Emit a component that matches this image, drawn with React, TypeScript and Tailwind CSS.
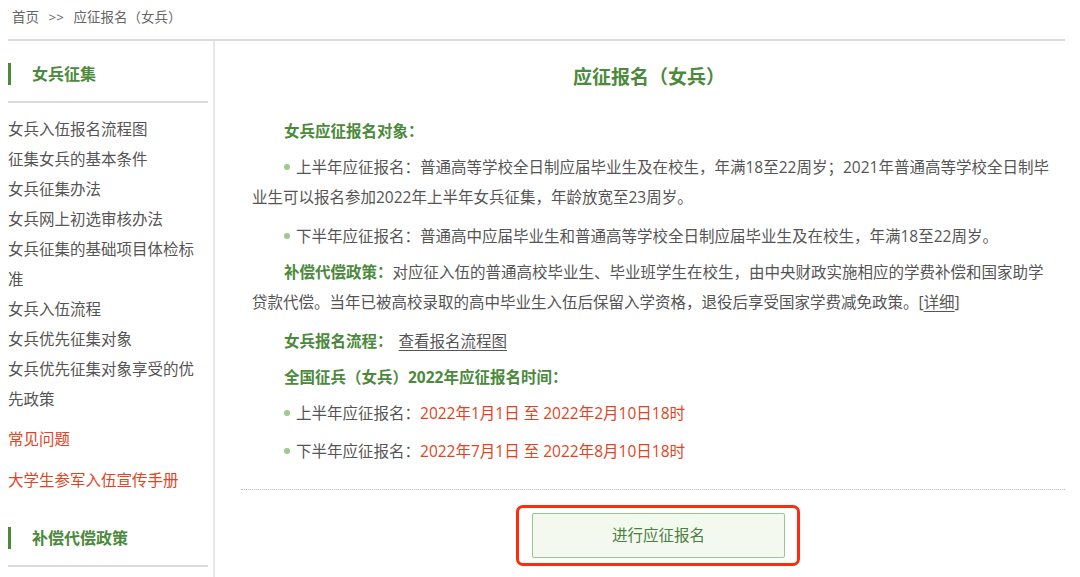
import React from "react";

const G = "text-[#4b8a3c]";

function Dot() {
  return <span className="inline-block w-[6px] h-[6px] rounded-full bg-[#9dcb8e] mr-[6px] align-middle relative top-[-2px]" />;
}

export default function App() {
  return (
    <div className="w-[1080px] h-[577px] bg-white overflow-hidden font-['Open_Sans','Noto_Sans_CJK_SC',sans-serif] text-[#555]">
      <div className="ml-[8px] mr-[15px] h-[41px] border-b-2 border-[#dcdcdc] pl-[4px] pt-[7px] text-[13.5px] leading-[20px] text-[#666]">
        首页 <span className="mx-[6px]">&gt;&gt;</span> 应征报名（女兵）
      </div>
      <div className="flex ml-[8px] mr-[15px]">
        <div className="w-[200px] shrink-0">
          <div className={`mt-[22px] h-[22px] border-l-[3px] border-[#4b8a3c] pl-[21px] text-[16px] leading-[22px] font-bold ${G}`}>女兵征集</div>
          <div className="mt-[16px] border-b-2 border-[#dcdcdc]" />
          <div className="mt-[11px] text-[15.5px] leading-[30px] text-[#555] whitespace-nowrap">
            <div>女兵入伍报名流程图</div>
            <div>征集女兵的基本条件</div>
            <div>女兵征集办法</div>
            <div>女兵网上初选审核办法</div>
            <div>女兵征集的基础项目体检标<br />准</div>
            <div>女兵入伍流程</div>
            <div>女兵优先征集对象</div>
            <div>女兵优先征集对象享受的优<br />先政策</div>
          </div>
          <div className="mt-[10px] text-[15.5px] leading-[30px] text-[#e0451f]">常见问题</div>
          <div className="mt-[11px] text-[15.5px] leading-[30px] text-[#e0451f]">大学生参军入伍宣传手册</div>
          <div className={`mt-[32px] h-[22px] border-l-[3px] border-[#4b8a3c] pl-[21px] text-[16px] leading-[22px] font-bold ${G}`}>补偿代偿政策</div>
          <div className="mt-[16px] border-b-2 border-[#dcdcdc]" />
        </div>
        <div className="ml-[5px] flex-1 border-l-2 border-[#e8e8e8] pl-[26px] h-[540px]">
          <div className={`mt-[21px] text-center text-[19px] leading-[30px] font-bold ${G} pr-[8px]`}>应征报名（女兵）</div>
          <div className="px-[11px] text-[15.5px] leading-[30px] whitespace-nowrap">
            <p className={`mt-[24px] pl-[32px] font-bold ${G}`}>女兵应征报名对象：</p>
            <p className="mt-[6px]">
              <span className="pl-[32px]" /><Dot />上半年应征报名：普通高等学校全日制应届毕业生及在校生，年满18至22周岁；2021年普通高等学校全日制毕<br />业生可以报名参加2022年上半年女兵征集，年龄放宽至23周岁。
            </p>
            <p className="mt-[9px] pl-[32px]"><Dot />下半年应征报名：普通高中应届毕业生和普通高等学校全日制应届毕业生及在校生，年满18至22周岁。</p>
            <p className="mt-[6px]">
              <span className="pl-[32px]" /><span className={`font-bold ${G}`}>补偿代偿政策：</span>对应征入伍的普通高校毕业生、毕业班学生在校生，由中央财政实施相应的学费补偿和国家助学<br />贷款代偿。当年已被高校录取的高中毕业生入伍后保留入学资格，退役后享受国家学费减免政策。[<span className="underline underline-offset-[3px]">详细</span>]
            </p>
            <p className="mt-[9px] pl-[32px]"><span className={`font-bold ${G}`}>女兵报名流程：</span> <span className="ml-[2px] underline underline-offset-[3px]">查看报名流程图</span></p>
            <p className={`mt-[6px] pl-[32px] font-bold ${G}`}>全国征兵（女兵）2022年应征报名时间：</p>
            <p className="mt-[6px] pl-[32px]"><Dot />上半年应征报名：<span className="text-[#e0451f]">2022年1月1日 至 2022年2月10日18时</span></p>
            <p className="mt-[8px] pl-[32px]"><Dot />下半年应征报名：<span className="text-[#e0451f]">2022年7月1日 至 2022年8月10日18时</span></p>
          </div>
          <div className="mt-[23px] border-b border-dotted border-[#bdbdbd]" />
          <div className="flex justify-center pl-[10px] mt-[15px]">
            <div className="w-[284px] h-[61px] border-[3px] border-[#ff2a10] rounded-[7px] pt-[5px] pl-[13px]">
              <div className="w-[253px] h-[45px] border border-[#9cc68f] bg-[#f4f9f0] rounded-[2px] flex items-center justify-center text-[15.5px] text-[#4a8040]">进行应征报名</div>
            </div>
          </div>
        </div>
      </div>
    </div>
  );
}
